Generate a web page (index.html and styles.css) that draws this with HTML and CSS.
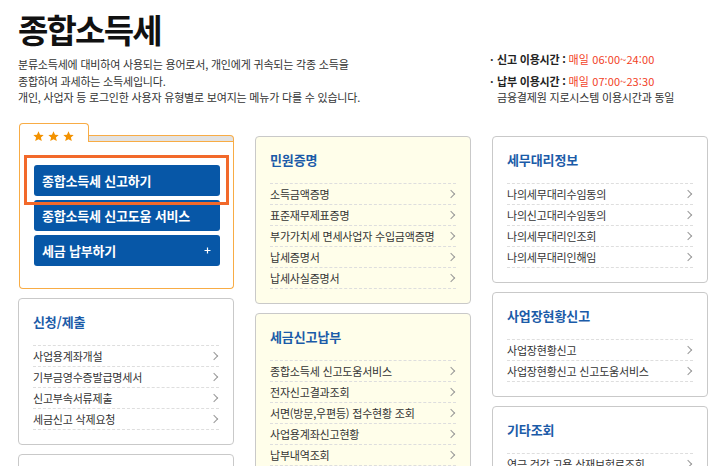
FILE: index.html
```html
<!DOCTYPE html>
<html lang="ko">
<head>
<meta charset="utf-8">
<title>종합소득세</title>
<link rel="stylesheet" href="styles.css">
</head>
<body>
<div class="page">
  <header class="head">
    <div class="intro">
      <h1 class="title">종합소득세</h1>
      <p class="desc">분류소득세에 대비하여 사용되는 용어로서, 개인에게 귀속되는 각종 소득을<br>종합하여 과세하는 소득세입니다.<br>개인, 사업자 등 로그인한 사용자 유형별로 보여지는 메뉴가 다를 수 있습니다.</p>
    </div>
    <ul class="hours">
      <li><b>신고 이용시간 :</b> <span class="red">매일 06:00~24:00</span></li>
      <li><b>납부 이용시간 :</b> <span class="red">매일 07:00~23:30</span><br>금융결제원 지로시스템 이용시간과 동일</li>
    </ul>
  </header>

  <main class="cols">
    <div class="col col-left">
      <section class="fav">
        <div class="fav-tabs">
          <div class="fav-tab">
            <svg class="star" viewBox="0 0 10 10" width="11" height="11"><path d="M5 0.3l1.4 3 3.3.3-2.5 2.2.8 3.3L5 7.4 2 9.1l.8-3.3L.3 3.6l3.3-.3z"/></svg>
            <svg class="star" viewBox="0 0 10 10" width="11" height="11"><path d="M5 0.3l1.4 3 3.3.3-2.5 2.2.8 3.3L5 7.4 2 9.1l.8-3.3L.3 3.6l3.3-.3z"/></svg>
            <svg class="star" viewBox="0 0 10 10" width="11" height="11"><path d="M5 0.3l1.4 3 3.3.3-2.5 2.2.8 3.3L5 7.4 2 9.1l.8-3.3L.3 3.6l3.3-.3z"/></svg>
          </div>
          <div class="fav-strip"></div>
        </div>
        <div class="fav-body">
          <a class="btn" href="#">종합소득세 신고하기</a>
          <a class="btn" href="#">종합소득세 신고도움 서비스</a>
          <a class="btn" href="#">세금 납부하기
            <svg class="plus" viewBox="0 0 7 7" width="7" height="7"><path d="M3.5 0.5v6M0.5 3.5h6" stroke="#fff" stroke-width="1.2"/></svg>
          </a>
          <span class="focus-ring"></span>
        </div>
      </section>

      <section class="card">
        <h2 class="card-title">신청/제출</h2>
        <ul class="links">
          <li><a href="#">사업용계좌개설</a></li>
          <li><a href="#">기부금영수증발급명세서</a></li>
          <li><a href="#">신고부속서류제출</a></li>
          <li><a href="#">세금신고 삭제요청</a></li>
        </ul>
      </section>

      <section class="card">
        <h2 class="card-title">&nbsp;</h2>
      </section>
    </div>

    <div class="col col-mid">
      <section class="card card-yellow">
        <h2 class="card-title">민원증명</h2>
        <ul class="links">
          <li><a href="#">소득금액증명</a></li>
          <li><a href="#">표준재무제표증명</a></li>
          <li><a href="#">부가가치세 면세사업자 수입금액증명</a></li>
          <li><a href="#">납세증명서</a></li>
          <li><a href="#">납세사실증명서</a></li>
        </ul>
      </section>

      <section class="card card-yellow">
        <h2 class="card-title">세금신고납부</h2>
        <ul class="links">
          <li><a href="#">종합소득세 신고도움서비스</a></li>
          <li><a href="#">전자신고결과조회</a></li>
          <li><a href="#">서면(방문,우편등) 접수현황 조회</a></li>
          <li><a href="#">사업용계좌신고현황</a></li>
          <li><a href="#">납부내역조회</a></li>
        </ul>
      </section>
    </div>

    <div class="col col-right">
      <section class="card">
        <h2 class="card-title">세무대리정보</h2>
        <ul class="links">
          <li><a href="#">나의세무대리수임동의</a></li>
          <li><a href="#">나의신고대리수임동의</a></li>
          <li><a href="#">나의세무대리인조회</a></li>
          <li><a href="#">나의세무대리인해임</a></li>
        </ul>
      </section>

      <section class="card">
        <h2 class="card-title">사업장현황신고</h2>
        <ul class="links">
          <li><a href="#">사업장현황신고</a></li>
          <li><a href="#">사업장현황신고 신고도움서비스</a></li>
        </ul>
      </section>

      <section class="card">
        <h2 class="card-title">기타조회</h2>
        <ul class="links">
          <li><a href="#">연금 건강 고용 산재보험료조회</a></li>
        </ul>
      </section>
    </div>
  </main>
</div>
</body>
</html>
```

FILE: styles.css
```css
* { box-sizing: border-box; }

html, body {
  margin: 0;
  padding: 0;
  background: #fff;
  overflow: hidden;
}

body {
  font-family: "Noto Sans CJK KR", "Noto Sans", sans-serif;
  color: #333;
  font-size: 11px;
  letter-spacing: -0.2px;
}

a { color: inherit; text-decoration: none; }
ul { list-style: none; margin: 0; padding: 0; }

.page {
  width: 708px;
  padding: 11px 0 0 18px;
}

/* header */
.head {
  display: grid;
  grid-template-columns: 1fr 218px;
  align-items: end;
}

.title {
  margin: 0;
  font-size: 33px;
  line-height: 36px;
  font-weight: 700;
  letter-spacing: -1.8px;
  color: #111;
}

.desc {
  margin: 9px 0 0;
  line-height: 16.5px;
  color: #333;
}

.hours {
  display: flex;
  flex-direction: column;
  gap: 5.5px;
  line-height: 16.5px;
  color: #333;
}

.hours li {
  padding-left: 7px;
}

.hours li::before {
  content: "·";
  display: inline-block;
  width: 7px;
  margin-left: -7px;
  font-weight: 700;
}

.hours b {
  color: #222;
  font-weight: 700;
}

.red {
  color: #f2421f;
  letter-spacing: 0.1px;
}

/* columns */
.cols {
  display: grid;
  grid-template-columns: 216px 216px 216px;
  column-gap: 21px;
  align-items: start;
  margin-top: 17px;
}

.col {
  display: flex;
  flex-direction: column;
  gap: 9px;
}

.col-mid, .col-right {
  padding-top: 13px;
}

/* favourite box */
.fav {
  margin-left: 1px;
  width: 215px;
}

.fav-tabs {
  display: flex;
  align-items: flex-end;
}

.fav-tab {
  width: 70px;
  height: 19px;
  border: 1px solid #f8ac45;
  border-bottom: none;
  border-radius: 4px 4px 0 0;
  background: #fff;
  display: flex;
  align-items: flex-end;
  gap: 4px;
  padding: 0 0 0 13px;
}

.star {
  fill: #f39200;
  width: 11px;
  height: 11px;
  display: block;
}

.fav-strip {
  flex: 1;
  height: 7px;
  background: #e2e2e2;
  border: 1px solid #f8ac45;
  border-left: none;
  border-radius: 0 4px 0 0;
}

.fav-body {
  position: relative;
  border: 1px solid #f8ac45;
  border-top: none;
  border-radius: 0 0 4px 4px;
  padding: 23px 13px 22px 14px;
  display: flex;
  flex-direction: column;
  gap: 4px;
}

.btn {
  display: flex;
  align-items: center;
  justify-content: space-between;
  height: 31px;
  padding: 0 9px 0 8px;
  border-radius: 3px;
  background: #0757a7;
  color: #fff;
  font-size: 13px;
  font-weight: 700;
  letter-spacing: -0.2px;
}

.plus { display: block; }

.focus-ring {
  position: absolute;
  left: 4px;
  top: 13px;
  width: 205px;
  height: 50px;
  border: 3px solid #f2692a;
  pointer-events: none;
}

/* cards */
.card {
  border: 1px solid #c9c9c9;
  border-radius: 4px;
  background: #fff;
  padding: 14px 14px 14px;
}

.card-yellow {
  background: #fffeea;
}

.card-title {
  margin: 0 0 14px;
  font-size: 13px;
  line-height: 18px;
  font-weight: 700;
  letter-spacing: -0.1px;
  color: #1b5ba8;
}

.links li {
  border-top: 1px dashed #dedede;
}

.links li:last-child {
  border-bottom: 1px dashed #dedede;
}

.links a {
  display: flex;
  align-items: center;
  justify-content: space-between;
  height: 20px;
  color: #333;
}

.links a::after {
  content: "";
  width: 5px;
  height: 5px;
  border-top: 1px solid #999;
  border-right: 1px solid #999;
  transform: rotate(45deg);
  margin-right: 2px;
}
```
